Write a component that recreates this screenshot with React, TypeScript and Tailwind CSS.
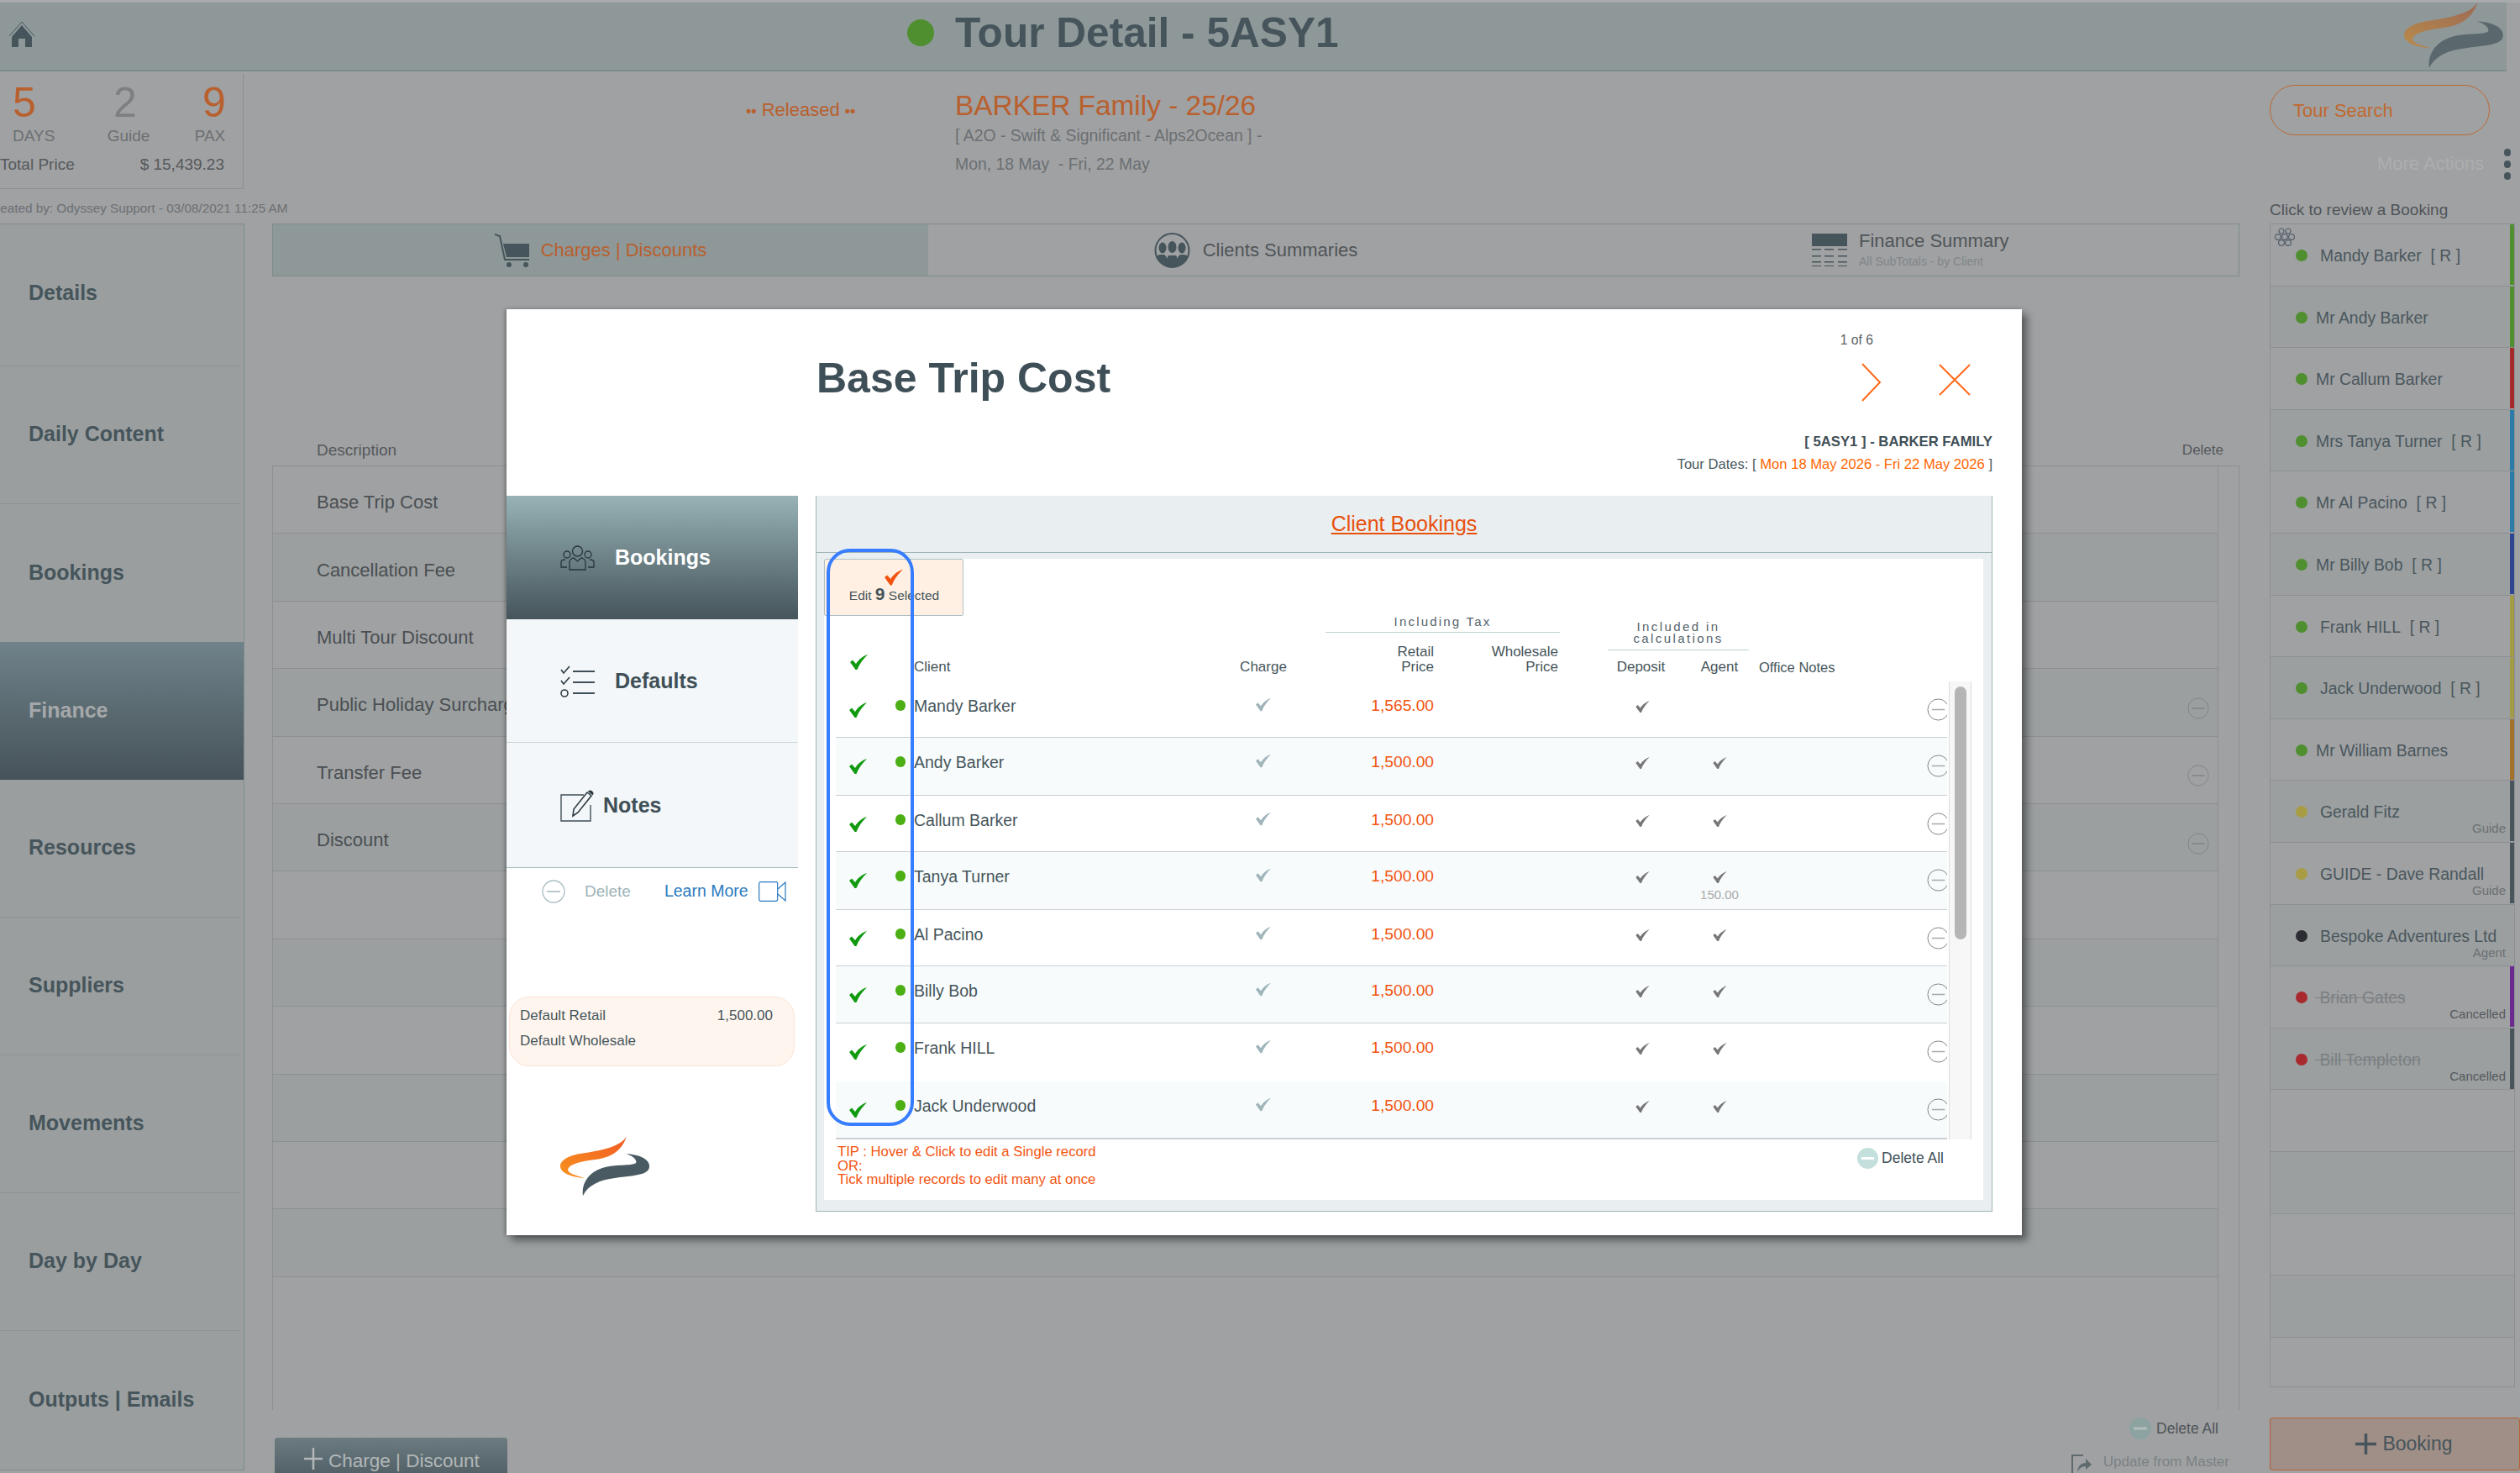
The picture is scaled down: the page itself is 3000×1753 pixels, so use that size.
import React from "react";

const Check = ({ c, w, h, thin }: { c: string; w: number; h: number; thin?: boolean }) => (
  <svg width={w} height={h} viewBox="0 0 21 18" className="block">
    <path
      fill={c}
      d={thin ? "M0 8 L2 6.5 L6.5 12 C9 7 14 3 21 0 C15 5 10 11 7.5 18 L6 18 Z" : "M0 9 L3 6.5 L7 11 C10 6 15 2 21 0 C16 5 11 11 8.5 18 L6.5 18 Z"}
    />
  </svg>
);

const Logo = ({ w, h, a, b, g, id }: { w: number; h: number; a: string; b: string; g: string; id: string }) => (
  <svg width={w} height={h} viewBox="0 0 107 72" className="block">
    <defs>
      <linearGradient id={id} x1="0" y1="1" x2="1" y2="0">
        <stop offset="0" stopColor={a} />
        <stop offset="1" stopColor={b} />
      </linearGradient>
    </defs>
    <path fill={`url(#${id})`} d="M79 0 C73 12 50 17 30 20 C12 22 0 28 0 36 C0 44 14 49 29 50 C18 47 9 44 9 40 C10 34 22 31 34 29 C55 27 72 22 79 0 Z" />
    <path fill={g} d="M78 21 C95 22 107 28 106 37 C105 47 85 47 65 50 C48 52 33 58 27 71 C25 58 32 44 50 38 C65 33 85 36 90 32 C92 28 85 23 78 21 Z" />
  </svg>
);

const Ring = ({ d, ring, line, sw = 1 }: { d: number; ring: string; line: string; sw?: number }) => (
  <svg width={d} height={d} viewBox="0 0 28 28" className="block shrink-0">
    <circle cx="14" cy="14" r="13" fill="none" stroke={ring} strokeWidth={sw} />
    <path d="M6 14 H22" stroke={line} strokeWidth="1.6" />
  </svg>
);

const Solid = ({ d, bg, dash }: { d: number; bg: string; dash: string }) => (
  <svg width={d} height={d} viewBox="0 0 26 26" className="block shrink-0">
    <circle cx="13" cy="13" r="13" fill={bg} />
    <path d="M5 13 H21" stroke={dash} strokeWidth="3" />
  </svg>
);

const navItems = ["Details", "Daily Content", "Bookings", "Finance", "Resources", "Suppliers", "Movements", "Day by Day", "Outputs | Emails"];

const charges: { t: string; m?: boolean }[] = [
  { t: "Base Trip Cost" },
  { t: "Cancellation Fee" },
  { t: "Multi Tour Discount" },
  { t: "Public Holiday Surcharge", m: true },
  { t: "Transfer Fee", m: true },
  { t: "Discount", m: true },
  { t: "" }, { t: "" }, { t: "" }, { t: "" }, { t: "" }, { t: "" },
];

const bookings: { n: string; dot: string; strip: string; ml: string; sub?: string; strike?: boolean }[] = [
  { n: "Mandy Barker\u00a0\u00a0[ R ]", dot: "bg-[#4f8f2f]", strip: "bg-[#4f8f2f]", ml: "ml-[15px]" },
  { n: "Mr Andy Barker", dot: "bg-[#4f8f2f]", strip: "bg-[#4f8f2f]", ml: "ml-[10px]" },
  { n: "Mr Callum Barker", dot: "bg-[#4f8f2f]", strip: "bg-[#a52a2a]", ml: "ml-[10px]" },
  { n: "Mrs Tanya Turner\u00a0\u00a0[ R ]", dot: "bg-[#4f8f2f]", strip: "bg-[#2a7ba8]", ml: "ml-[10px]" },
  { n: "Mr Al Pacino\u00a0\u00a0[ R ]", dot: "bg-[#4f8f2f]", strip: "bg-[#2a7ba8]", ml: "ml-[10px]" },
  { n: "Mr Billy Bob\u00a0\u00a0[ R ]", dot: "bg-[#4f8f2f]", strip: "bg-[#2f4590]", ml: "ml-[10px]" },
  { n: "Frank HILL\u00a0\u00a0[ R ]", dot: "bg-[#4f8f2f]", strip: "bg-[#a39a45]", ml: "ml-[15px]" },
  { n: "Jack Underwood\u00a0\u00a0[ R ]", dot: "bg-[#4f8f2f]", strip: "bg-[#a39a45]", ml: "ml-[15px]" },
  { n: "Mr William Barnes", dot: "bg-[#4f8f2f]", strip: "bg-[#a56f2c]", ml: "ml-[10px]" },
  { n: "Gerald Fitz", dot: "bg-[#a89c45]", strip: "bg-[#48555a]", ml: "ml-[15px]", sub: "Guide" },
  { n: "GUIDE - Dave Randall", dot: "bg-[#a89c45]", strip: "bg-[#48555a]", ml: "ml-[15px]", sub: "Guide" },
  { n: "Bespoke Adventures Ltd", dot: "bg-[#2c2d33]", strip: "bg-transparent", ml: "ml-[15px]", sub: "Agent" },
  { n: "\u00a0Brian Gates", dot: "bg-[#a82a2e]", strip: "bg-[#6c2a90]", ml: "ml-[9px]", sub: "Cancelled", strike: true },
  { n: "\u00a0Bill Templeton", dot: "bg-[#a82a2e]", strip: "bg-[#48555a]", ml: "ml-[9px]", sub: "Cancelled", strike: true },
  { n: "", dot: "", strip: "bg-transparent", ml: "" },
  { n: "", dot: "", strip: "bg-transparent", ml: "" },
  { n: "", dot: "", strip: "bg-transparent", ml: "" },
  { n: "", dot: "", strip: "bg-transparent", ml: "" },
];

const clients: { n: string; p: string; agent: boolean; note?: string; h: string; alt: boolean; last?: boolean }[] = [
  { n: "Mandy Barker", p: "1,565.00", agent: false, h: "h-[67px]", alt: false },
  { n: "Andy Barker", p: "1,500.00", agent: true, h: "h-[69px]", alt: true },
  { n: "Callum Barker", p: "1,500.00", agent: true, h: "h-[67px]", alt: false },
  { n: "Tanya Turner", p: "1,500.00", agent: true, note: "150.00", h: "h-[69px]", alt: true },
  { n: "Al Pacino", p: "1,500.00", agent: true, h: "h-[67px]", alt: false },
  { n: "Billy Bob", p: "1,500.00", agent: true, h: "h-[68px]", alt: true },
  { n: "Frank HILL", p: "1,500.00", agent: true, h: "h-[69px]", alt: false, last: true },
  { n: "Jack Underwood", p: "1,500.00", agent: true, h: "h-[67px]", alt: true, last: true },
];

const cols = "grid grid-cols-[71px_22px_372px_88px_159px_148px_52px_93px_94px_196px_28px]";

export default function App() {
  return (
    <div className="relative w-[3000px] h-[1753px] overflow-hidden bg-[#a0a1a3] font-['Liberation_Sans',Arial,sans-serif] text-[#4a5a60]">
      <div className="h-[3px] bg-[#a9aaac]" />
      {/* Header */}
      <div className="h-[82px] w-[2984px] bg-[#8e9899] border-b-2 border-[#7d8c8c] flex items-center pl-[10px]">
        <svg width="32" height="32" viewBox="0 0 32 32" className="block shrink-0 -mt-[4px]">
          <path d="M1 18 L16 1 L31 18" fill="none" stroke="#46555b" strokeWidth="1" />
          <path d="M16 5 L28 19 V31 H20 V21 H12 V31 H4 V19 Z" fill="#46555b" />
        </svg>
        <div className="ml-[1038px] w-[32px] h-[32px] rounded-full bg-[#4f8f2f] shrink-0 -mt-[8px]" />
        <div className="ml-[25px] text-[49.6px] leading-none font-bold text-[#46555b] whitespace-nowrap -mt-[6px]">Tour Detail - 5ASY1</div>
        <div className="ml-auto mr-[2px] -mt-[2px]">
          <Logo id="lg1" w={121} h={80} a="#b88a4a" b="#9c6a55" g="#5a686e" />
        </div>
      </div>

      {/* Info row */}
      <div className="h-[181px] flex">
        <div className="w-[290px] shrink-0">
          <div className="mt-[3px] h-[137px] border-r border-b border-[#8b9093]">
            <div className="flex pl-[15px] pt-[9px]">
              <div className="w-[112px] shrink-0">
                <div className="text-[50px] leading-none text-[#b8602e]">5</div>
                <div className="mt-[5px] text-[19px] leading-[19px] text-[#6b7072]">DAYS</div>
              </div>
              <div className="w-[52px] shrink-0 flex flex-col items-center">
                <div className="text-[50px] leading-none text-[#7d8082] -ml-[8px]">2</div>
                <div className="mt-[5px] text-[19px] leading-[19px] text-[#6b7072]">Guide</div>
              </div>
              <div className="ml-[52px] w-[38px] shrink-0 flex flex-col items-center">
                <div className="text-[50px] leading-none text-[#b8602e] ml-[10px]">9</div>
                <div className="mt-[5px] text-[19px] leading-[19px] text-[#6b7072]">PAX</div>
              </div>
            </div>
            <div className="mt-[15px] flex justify-between pr-[22px] text-[19px] leading-[19px] text-[#55595c]">
              <span>Total Price</span>
              <span>$ 15,439.23</span>
            </div>
          </div>
          <div className="mt-[14px] -ml-[16px] whitespace-nowrap text-[15.3px] leading-[17px] text-[#6b7072]">Created by: Odyssey Support - 03/08/2021 11:25 AM</div>
        </div>
        <div className="ml-[598px] w-[249px] shrink-0 mt-[35px] text-[22px] leading-[22px] text-[#b8602e] whitespace-nowrap">
          <span className="text-[18px] font-bold">••</span> Released <span className="text-[18px] font-bold">••</span>
        </div>
        <div className="w-[1000px] shrink-0 whitespace-nowrap">
          <div className="mt-[23px] text-[33.4px] leading-[36px] text-[#b8602e]">BARKER Family - 25/26</div>
          <div className="mt-[5px] text-[19.4px] leading-[24px] text-[#6b7072]">[ A2O - Swift &amp; Significant - Alps2Ocean ] -</div>
          <div className="mt-[10px] text-[19.4px] leading-[24px] text-[#6b7072]">Mon, 18 May&nbsp;&nbsp;- Fri, 22 May</div>
        </div>
        <div className="ml-auto w-[298px] shrink-0 flex flex-col">
          <div className="mt-[16px] w-[262px] h-[60px] rounded-[30px] border border-[#bb6a32] flex items-center pl-[27px] text-[22px] text-[#c0692f]">Tour Search</div>
          <div className="mt-[17px] h-[34px] flex items-center">
            <span className="ml-[128px] text-[22px] leading-none text-[#adaeb0] whitespace-nowrap">More Actions</span>
            <span className="ml-[24px] flex flex-col gap-[5px]">
              <span className="block w-[8px] h-[9px] rounded-full bg-[#46555b]" />
              <span className="block w-[8px] h-[9px] rounded-full bg-[#46555b]" />
              <span className="block w-[8px] h-[9px] rounded-full bg-[#46555b]" />
            </span>
          </div>
          <div className="mt-[27px] text-[19px] leading-[22px] text-[#4f5558] whitespace-nowrap">Click to review a Booking</div>
        </div>
      </div>

      {/* Body */}
      <div className="flex h-[1487px]">
        {/* Nav */}
        <div className="w-[291px] h-[1484px] shrink-0 bg-[#9a9e9f] border-t border-r border-b border-[#7d8c8c] flex flex-col">
          {navItems.map((n, i) => (
            <div
              key={n}
              className={
                i === 0
                  ? "h-[169px] shrink-0 mr-[4px] border-b border-[#8b9497] flex items-center pl-[34px] pb-[4px] text-[25px] font-bold text-[#46555b]"
                  : i === 3
                  ? "h-[164px] shrink-0 bg-gradient-to-b from-[#70828a] to-[#465359] flex items-center pl-[34px] pb-[1px] text-[25px] font-bold text-[#a5a8aa]"
                  : i === 2 || i === 8
                  ? "h-[164px] shrink-0 flex items-center pl-[34px] pb-[1px] text-[25px] font-bold text-[#46555b]"
                  : "h-[164px] shrink-0 mr-[4px] border-b border-[#8b9497] flex items-center pl-[34px] pb-[1px] text-[25px] font-bold text-[#46555b]"
              }
            >
              {n}
            </div>
          ))}
        </div>

        {/* Main */}
        <div className="ml-[33px] w-[2342px] shrink-0 flex flex-col">
          <div className="h-[63px] grid grid-cols-3 border border-[#7d8c8c] shrink-0">
            <div className="bg-[#8e9899] flex items-center justify-center">
              <svg width="42" height="40" viewBox="0 0 42 40" className="block">
                <path d="M0 1 L6 3 L12 31 H41" fill="none" stroke="#46555b" strokeWidth="2" />
                <path d="M10 12 H41 V28 H14 Z" fill="#46555b" />
                <circle cx="17" cy="37" r="3" fill="#46555b" />
                <circle cx="37" cy="37" r="3" fill="#46555b" />
              </svg>
              <span className="ml-[13px] text-[22px] text-[#b8602e] whitespace-nowrap">Charges | Discounts</span>
            </div>
            <div className="flex items-center justify-center">
              <svg width="43" height="42" viewBox="0 0 43 42" className="block">
                <defs>
                  <clipPath id="cc"><circle cx="21.5" cy="21" r="20" /></clipPath>
                </defs>
                <circle cx="21.5" cy="21" r="20" fill="none" stroke="#46555b" strokeWidth="2" />
                <g clipPath="url(#cc)" fill="#46555b">
                  <ellipse cx="10" cy="18" rx="4.5" ry="6.5" />
                  <ellipse cx="33" cy="18" rx="4.5" ry="6.5" />
                  <ellipse cx="21.5" cy="17" rx="5" ry="7" />
                  <path d="M0 42 V31 C4 25 8 26 10 26 C13 26 15 28 15 31 L17 27 H26 L28 31 C28 28 30 26 33 26 C36 26 40 26 43 31 V42 Z" />
                </g>
              </svg>
              <span className="ml-[15px] text-[22px] text-[#4f5558] whitespace-nowrap">Clients Summaries</span>
            </div>
            <div className="flex items-center justify-center">
              <svg width="42" height="39" viewBox="0 0 42 39" className="block">
                <rect x="0" y="0" width="42" height="15" fill="#46555b" />
                {[18, 26, 33, 38].map((y) => (
                  <g key={y} fill="#46555b">
                    <rect x="0" y={y} width="11" height="1.5" />
                    <rect x="15" y={y} width="11" height="1.5" />
                    <rect x="31" y={y} width="11" height="1.5" />
                  </g>
                ))}
              </svg>
              <div className="ml-[14px] w-[180px] whitespace-nowrap">
                <div className="text-[22px] leading-[24px] text-[#4f5558]">Finance Summary</div>
                <div className="mt-[4px] text-[14px] leading-[17px] text-[#7f8688]">All SubTotals - by Client</div>
              </div>
            </div>
          </div>

          <div className="h-[225px] shrink-0 flex items-end justify-between pl-[53px] pr-[19px] pb-[7px] leading-[22px] text-[#55595c]">
            <span className="text-[19px]">Description</span>
            <span className="text-[17px]">Delete</span>
          </div>

          <div className="h-[1124px] shrink-0 border-l border-t border-[#8c9093] flex">
            <div className="w-[2315px] shrink-0 flex flex-col">
              {charges.map((c, i) => (
                <div
                  key={i}
                  className={
                    i % 2 === 0
                      ? "h-[80.4px] shrink-0 border-b border-[#8c9093] bg-[#a0a1a3] flex items-center justify-between pl-[52px] pr-[10px] pt-[6px] text-[22px] text-[#4a4f52] whitespace-nowrap"
                      : "h-[80.4px] shrink-0 border-b border-[#8c9093] bg-[#9b9fa0] flex items-center justify-between pl-[52px] pr-[10px] pt-[6px] text-[22px] text-[#4a4f52] whitespace-nowrap"
                  }
                >
                  <span>{c.t}</span>
                  {c.m ? <span className="mt-[8px]"><Ring d={26} ring="#7f8488" line="#7f8488" /></span> : null}
                </div>
              ))}
            </div>
            <div className="w-[26px] shrink-0 border-l border-r border-[#8c9093]" />
          </div>

          <div className="flex-1 flex justify-between">
            <div className="ml-[3px] mt-[33px] w-[277px] h-[60px] rounded-t-[3px] bg-gradient-to-b from-[#6b7b80] to-[#4a585e] flex items-start pl-[35px] pt-[11px] text-[22.5px] text-[#b3b7b8] whitespace-nowrap">
              <svg width="22" height="26" viewBox="0 0 22 26" className="block mr-[7px] mt-px">
                <path d="M11 0 V26 M0 13 H22" stroke="#b3b7b8" strokeWidth="2.5" />
              </svg>
              <span>Charge | Discount</span>
            </div>
            <div className="flex flex-col items-end pr-[14px] -mr-[2px]">
              <div className="mt-[9px] flex items-center pr-[13px] text-[17.5px] leading-[26px] text-[#4f5558]">
                <Solid d={26} bg="#8ca3a2" dash="#b4bcbd" />
                <span className="ml-[6px]">Delete All</span>
              </div>
              <div className="mt-[17px] flex items-start text-[17px] leading-[20px] text-[#7a8284] whitespace-nowrap">
                <svg width="24" height="24" viewBox="0 0 24 24" className="block mr-[14px]">
                  <path d="M1 24 V2 H14" fill="none" stroke="#5f6a6e" strokeWidth="2" />
                  <path d="M7 22 C8 14 12 11 17 11 V6 L24 13 L17 19 V15 C12 15 9 18 7 22 Z" fill="#5f6a6e" />
                </svg>
                <span>Update from Master</span>
              </div>
            </div>
          </div>
        </div>

        {/* Bookings list */}
        <div className="ml-[36px] w-[292px] shrink-0 flex flex-col">
          <div className="relative h-[1385px] shrink-0 border-l border-t border-r border-b border-[#8c9093] flex flex-col overflow-hidden">
            <svg width="26" height="24" viewBox="0 0 26 24" className="absolute left-[4px] top-[4px]">
              <g fill="none" stroke="#55606a" strokeWidth="1.2">
                <circle cx="9" cy="4" r="3" />
                <circle cx="17" cy="4" r="3" />
                <circle cx="5" cy="11" r="3.4" />
                <circle cx="13" cy="11" r="3.4" />
                <circle cx="21" cy="11" r="3.4" />
                <circle cx="9" cy="18" r="3.4" />
                <circle cx="17" cy="18" r="3.4" />
              </g>
            </svg>
            {bookings.map((b, i) => (
              <div key={i} className={i % 2 === 1 ? "h-[73.6px] shrink-0 flex border-b border-[#8c9093] bg-[#9b9fa0]" : "h-[73.6px] shrink-0 flex border-b border-[#8c9093] bg-[#a0a1a3]"}>
                <div className="flex-1 min-w-0 flex flex-col">
                  {b.n ? (
                    <>
                      <div className="flex items-center pl-[30px] pt-[26px]">
                        <span className={"block w-[14px] h-[14px] rounded-full shrink-0 " + b.dot} />
                        <span className={"text-[19.4px] leading-[22px] whitespace-nowrap " + b.ml + (b.strike ? " line-through text-[#7a8083]" : " text-[#4a575d]")}>{b.n}</span>
                      </div>
                      {b.sub ? <div className={"pr-[5px] text-right text-[15px] leading-[18px] " + (b.strike ? "text-[#55595c]" : "text-[#6b7072]")}>{b.sub}</div> : null}
                    </>
                  ) : null}
                </div>
                <div className={"w-[5px] h-[72px] shrink-0 " + b.strip} />
              </div>
            ))}
          </div>
          <div className="mt-[36px] w-[298px] h-[63px] rounded-[3px] bg-[#a08f87] border border-[#b5603a] flex items-center justify-center pl-[22px] text-[23px] text-[#46555b]">
            <svg width="25" height="25" viewBox="0 0 25 25" className="block mr-[7px]">
              <path d="M12.5 0 V25 M0 12.5 H25" stroke="#46555b" strokeWidth="3.5" />
            </svg>
            <span>Booking</span>
          </div>
        </div>
      </div>

      {/* Modal */}
      <div className="absolute left-[603px] top-[368px] w-[1804px] h-[1102px] bg-white shadow-[6px_6px_9px_rgba(0,0,0,0.45),-2px_0_4px_rgba(0,0,0,0.25)] flex flex-col">
        <div className="h-[222px] shrink-0 flex justify-between">
          <div className="pl-[369px] pt-[53px] text-[50px] leading-[58px] font-bold text-[#3f4f57] whitespace-nowrap">Base Trip Cost</div>
          <div className="pr-[35px] flex flex-col items-end">
            <div className="mt-[28px] mr-[142px] text-[15.7px] leading-[17px] text-[#5a6064]">1 of 6</div>
            <div className="mt-[19px] mr-[26px] flex items-start">
              <svg width="24" height="46" viewBox="0 0 24 46" className="block">
                <path d="M1 1 L22 23 L1 45" fill="none" stroke="#ff6a1a" strokeWidth="2" />
              </svg>
              <svg width="38" height="38" viewBox="0 0 38 38" className="block ml-[68px] mt-[1px]">
                <path d="M1 1 L37 37 M37 1 L1 37" fill="none" stroke="#ff6a1a" strokeWidth="2" />
              </svg>
            </div>
            <div className="mt-[38px] text-[16.7px] leading-[20px] font-bold text-[#3f4f57] whitespace-nowrap">[ 5ASY1 ] - BARKER FAMILY</div>
            <div className="mt-[7px] text-[16.6px] leading-[20px] text-[#4a5a60] whitespace-nowrap">
              Tour Dates: [ <span className="text-[#ff6600]">Mon 18 May 2026 - Fri 22 May 2026</span> ]
            </div>
          </div>
        </div>

        <div className="flex">
          {/* Left tabs */}
          <div className="w-[347px] shrink-0 flex flex-col">
            <div className="h-[147px] bg-gradient-to-b from-[#97b3b5] to-[#46555c] flex items-center pl-[64px]">
              <svg width="41" height="30" viewBox="0 0 41 30" className="block">
                <g fill="none" stroke="#26343a" strokeWidth="1.3">
                  <circle cx="20.5" cy="7" r="6" />
                  <circle cx="8" cy="11" r="4" />
                  <circle cx="33" cy="11" r="4" />
                  <path d="M11 29 V20 C11 17 14 15 16 15 L20.5 19 L25 15 C27 15 30 17 30 20 V29 Z" />
                  <path d="M8 26 H1 V20 C1 18 3 17 6 17 M33 26 H40 V20 C40 18 38 17 35 17" />
                </g>
              </svg>
              <span className="ml-[24px] text-[25px] font-bold text-white">Bookings</span>
            </div>
            <div className="h-[147px] bg-[#f3f7f9] flex items-center pl-[64px] pt-[1px] border-b border-[#cfd6d9]">
              <svg width="41" height="38" viewBox="0 0 41 38" className="block">
                <path d="M1 5 L4 9 L11 1 M1 18 L4 22 L11 14" fill="none" stroke="#2d3b42" strokeWidth="1.6" />
                <circle cx="5" cy="33" r="4" fill="none" stroke="#2d3b42" strokeWidth="1.6" />
                <path d="M15 7 H41 M15 20 H41 M15 33 H41" stroke="#3f4f57" strokeWidth="1.8" />
              </svg>
              <span className="ml-[24px] text-[25px] font-bold text-[#3f4f57]">Defaults</span>
            </div>
            <div className="h-[149px] bg-[#f3f7f9] flex items-center pl-[64px] pt-[1px] border-b border-[#a8bcc0]">
              <svg width="41" height="38" viewBox="0 0 41 38" className="block shrink-0">
                <path d="M28 6 H1 V37 H36 V18" fill="none" stroke="#3f4f57" strokeWidth="1.4" />
                <path d="M15 31 L16 23 L32 3 L37 7 L21 27 Z" fill="none" stroke="#2d3b42" strokeWidth="1.6" />
                <path d="M33 2 C34 0 36 0 38 1.5 C40 3 40 5 38.5 6.5 Z" fill="#2d3b42" />
              </svg>
              <span className="ml-[10px] text-[25px] font-bold text-[#3f4f57]">Notes</span>
            </div>
            <div className="h-[56px] flex items-center pl-[42px]">
              <Ring d={28} ring="#a9bdc1" line="#a9bdc1" sw={1.3} />
              <span className="ml-[23px] text-[19px] text-[#9fb4b8]">Delete</span>
              <span className="ml-[40px] text-[19.5px] text-[#2a7ac0] whitespace-nowrap">Learn More</span>
              <svg width="33" height="24" viewBox="0 0 33 24" className="block ml-[12px]">
                <rect x="0.7" y="0.7" width="22" height="22.6" rx="2" fill="none" stroke="#2a7ac0" strokeWidth="1.2" />
                <path d="M23 9 L32 1 V23 L23 15" fill="none" stroke="#2a7ac0" strokeWidth="1.2" />
              </svg>
            </div>
            <div className="mt-[97px] ml-[3px] w-[340px] h-[83px] rounded-[24px] bg-[#fff5ef] border border-[#fde2d3] text-[17px] leading-[20px] text-[#46555b] pl-[12px] pr-[25px] pt-[12px]">
              <div className="flex justify-between"><span>Default Retail</span><span>1,500.00</span></div>
              <div className="mt-[10px]">Default Wholesale</div>
            </div>
            <div className="mt-[83px] ml-[64px]">
              <Logo id="lg2" w={107} h={72} a="#f7931e" b="#f15a24" g="#4a5a63" />
            </div>
          </div>

          {/* Right panel */}
          <div className="ml-[21px] w-[1401px] h-[852px] shrink-0 border-l border-r border-b border-[#9fb5b8] bg-[#e9eff1] flex flex-col">
            <div className="h-[68px] shrink-0 border-b border-[#9fb5b8] flex items-center justify-center text-[25px] text-[#e8500c] underline">Client Bookings</div>
            <div className="mt-[7px] ml-[9px] w-[1380px] h-[763px] bg-white flex flex-col">
              <div className="h-[68px] w-[166px] shrink-0 bg-[#fff0e3] border border-[#b0bfc4] rounded-[2px] flex flex-col items-center pt-[11px]">
                <Check c="#f25410" w={22} h={20} />
                <div className="-mt-[1px] text-[15.5px] leading-[22px] text-[#46555b] whitespace-nowrap pl-[1px]">
                  Edit <span className="text-[21px] font-bold">9</span> Selected
                </div>
              </div>
              <div className={"ml-[14px] w-[1323px] h-[78px] shrink-0 " + cols}>
                <div className="pl-[17px] pt-[46px]"><Check c="#119a0f" w={21} h={18} /></div>
                <div />
                <div className="flex items-end pb-[8px] text-[17px] leading-[18px] text-[#46555b]">Client</div>
                <div className="flex items-end justify-center pb-[8px] text-[17px] leading-[18px] text-[#46555b]">Charge</div>
                <div className="col-span-2 flex flex-col justify-between pb-[8px]">
                  <div className="ml-[30px] -mr-[2px] h-[20px] border-b border-[#b9d3d3] text-center text-[15px] leading-[13px] tracking-[2.2px] text-[#55636a] whitespace-nowrap">Including Tax</div>
                  <div className="grid grid-cols-[159px_148px] text-right text-[17px] leading-[18px] text-[#46555b]">
                    <div>Retail<br />Price</div>
                    <div>Wholesale<br />Price</div>
                  </div>
                </div>
                <div />
                <div className="col-span-2 flex flex-col justify-between pb-[8px]">
                  <div className="ml-[7px] mr-[12px] h-[41px] border-b border-[#b9d3d3] text-center text-[15px] leading-[14px] tracking-[2.4px] text-[#55636a] pt-[6px]">Included in<br />calculations</div>
                  <div className="grid grid-cols-[93px_94px] text-center text-[17px] leading-[18px] text-[#46555b]">
                    <div>Deposit</div>
                    <div>Agent</div>
                  </div>
                </div>
                <div className="flex items-end pb-[8px] text-[16.5px] leading-[18px] text-[#46555b] whitespace-nowrap">Office Notes</div>
                <div />
              </div>
              <div className="flex h-[545px] shrink-0">
                <div className="ml-[14px] w-[1323px] shrink-0 flex flex-col">
                  {clients.map((c) => (
                    <div key={c.n} className={c.h + " shrink-0 overflow-hidden " + cols + (c.last ? "" : " border-b border-[#c9cfd3]") + (c.alt ? " bg-[#f7fbfc]" : " bg-white")}>
                      <div className="pl-[16px] pt-[25px]"><Check c="#119a0f" w={21} h={18} /></div>
                      <div className="pt-[22px]"><span className="block w-[12px] h-[13px] rounded-full bg-[#4caf14]" /></div>
                      <div className="pt-[18px] text-[19.5px] leading-[22px] text-[#46555b] whitespace-nowrap">{c.n}</div>
                      <div className="pt-[18px] flex justify-center"><Check c="#9fb5ba" w={18} h={19} /></div>
                      <div className="pt-[18px] text-right text-[19.2px] leading-[22px] text-[#f25410]">{c.p}</div>
                      <div /><div />
                      <div className="pt-[23px] pl-[3px] flex justify-center"><Check c="#777777" w={17} h={14} /></div>
                      <div className="pt-[23px] flex flex-col items-center">
                        {c.agent ? <Check c="#777777" w={17} h={14} /> : null}
                        {c.note ? <div className="mt-[5px] text-[15px] leading-[17px] text-[#aaaaaa]">{c.note}</div> : null}
                      </div>
                      <div />
                      <div className="pt-[20px] pl-[4px]"><Ring d={27} ring="#808080" line="#aaaaaa" /></div>
                    </div>
                  ))}
                  <div className="h-[2px] border-t border-b border-[#c9cfd3]" />
                </div>
                <div className="ml-[2px] w-[27px] h-[545px] shrink-0 bg-[#f7f7f7] border-l border-r border-[#dddddd] pt-[6px] pl-[6px]">
                  <div className="w-[14px] h-[301px] rounded-full bg-[#b5b5b5]" />
                </div>
              </div>
              <div className="flex justify-between">
                <div className="ml-[16px] pt-[7px] text-[16.7px] leading-[16.5px] text-[#f25410] whitespace-nowrap">
                  TIP : Hover &amp; Click to edit a Single record<br />OR:<br />Tick multiple records to edit many at once
                </div>
                <div className="mr-[47px] pt-[9px] flex items-center h-[35px] text-[17.5px] text-[#3f4f57]">
                  <Solid d={25} bg="#c3e0dd" dash="#ffffff" />
                  <span className="ml-[4px]">Delete All</span>
                </div>
              </div>
            </div>
          </div>
        </div>

        {/* Annotation highlight */}
        <div className="absolute left-[381px] top-[285px] w-[104px] h-[687px] border-[4px] border-[#377dff] rounded-[28px]" />
      </div>
    </div>
  );
}
